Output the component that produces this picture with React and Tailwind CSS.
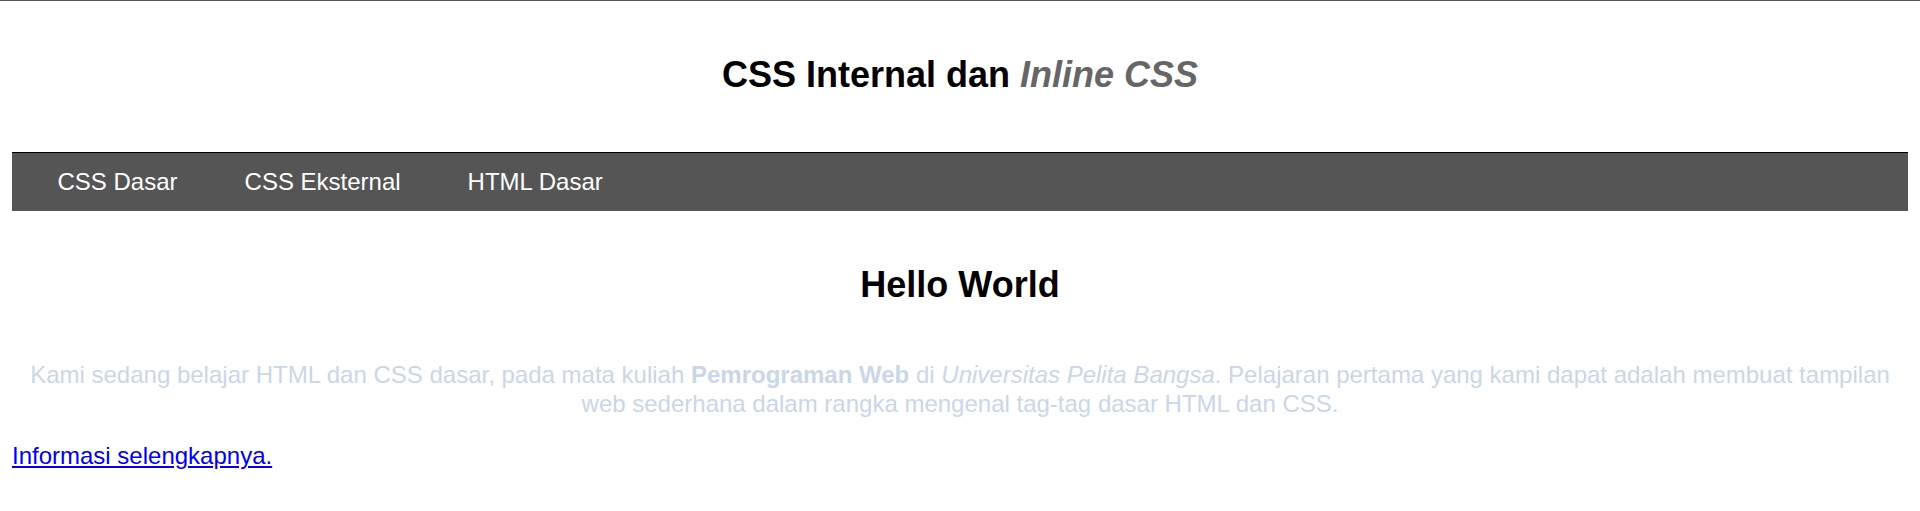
export default function App() {
  return (
    <div className="min-h-[511px] bg-white border-t border-[#555] px-[12px] font-['Liberation_Sans',Arial,sans-serif]">
      <h1 className="pt-[53px] text-[36px] leading-[41px] font-bold text-center text-black">
        CSS Internal dan <i className="text-[#666]">Inline CSS</i>
      </h1>
      <nav className="mt-[57px] border-t border-black bg-[#555] py-[15px] pl-[12px] flex text-[24px] leading-[28px] text-white">
        <a href="#" className="px-[33.5px]">CSS Dasar</a>
        <a href="#" className="px-[33.5px]">CSS Eksternal</a>
        <a href="#" className="px-[33.5px]">HTML Dasar</a>
      </nav>
      <h2 className="mt-[53px] text-[36px] leading-[41px] font-bold text-center text-black">Hello World</h2>
      <p className="mt-[55px] text-[24px] leading-[29px] text-center text-[#c9d7e6]">
        Kami sedang belajar HTML dan CSS dasar, pada mata kuliah <b>Pemrograman Web</b> di <i>Universitas Pelita Bangsa</i>. Pelajaran pertama yang kami dapat adalah membuat tampilan web sederhana dalam rangka mengenal tag-tag dasar HTML dan CSS.
      </p>
      <div className="mt-[24px] text-[24px] leading-[28px]">
        <a href="#" className="text-[#0000ee] underline">Informasi selengkapnya.</a>
      </div>
    </div>
  );
}
